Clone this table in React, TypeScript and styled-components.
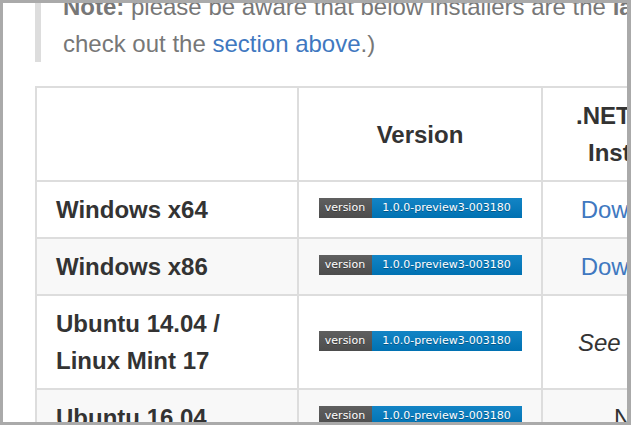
import React from "react";
import styled, { createGlobalStyle } from "styled-components";

const Global = createGlobalStyle`
  html, body { margin: 0; padding: 0; background: #fff; }
  body { font-family: "Liberation Sans", Arial, sans-serif; }
`;

const Frame = styled.div`
  box-sizing: border-box;
  width: 631px;
  height: 425px;
  border-style: solid;
  border-color: #aaaaaa;
  border-width: 3px 4px 3px 3px;
  overflow: hidden;
  background: #fff;
`;

const Content = styled.div`
  margin-top: -15px;
  padding-left: 32px;
  font-size: 24px;
  line-height: 37px;
  color: #333;
`;

const Quote = styled.blockquote`
  margin: 0 0 24px;
  padding: 0 22px;
  border-left: 6px solid #dddddd;
  color: #777;
  white-space: nowrap;
`;

const Link = styled.a`
  color: #4078c0;
  text-decoration: none;
`;

const Table = styled.table`
  border-collapse: separate;
  border-spacing: 0;
  table-layout: fixed;
  width: 692px;
  border-top: 2px solid #dddddd;
  border-left: 2px solid #dddddd;
`;

const Col = styled.col<{ $w: number }>`
  width: ${(p) => p.$w}px;
`;

const Row = styled.tr<{ $striped?: boolean }>`
  background: ${(p) => (p.$striped ? "#f8f8f8" : "#ffffff")};
`;

const Head = styled.th`
  box-sizing: border-box;
  padding: 9px 19px;
  border-right: 2px solid #dddddd;
  border-bottom: 2px solid #dddddd;
  font-weight: bold;
  text-align: center;
  vertical-align: middle;
`;

const Cell = styled.td<{ $align?: "left" | "center"; $bold?: boolean; $italic?: boolean }>`
  box-sizing: border-box;
  padding: 9px 19px;
  border-right: 2px solid #dddddd;
  border-bottom: 2px solid #dddddd;
  text-align: ${(p) => p.$align ?? "center"};
  font-weight: ${(p) => (p.$bold ? "bold" : "normal")};
  font-style: ${(p) => (p.$italic ? "italic" : "normal")};
  vertical-align: middle;
`;

const Badge = styled.span`
  display: inline-block;
  overflow: hidden;
  vertical-align: baseline;
  height: 20px;
  white-space: nowrap;
  font-family: "DejaVu Sans", Verdana, sans-serif;
  font-size: 11px;
  line-height: 20px;
  color: #fff;
`;

const BadgePart = styled.span<{ $bg: string; $w: number }>`
  display: inline-block;
  width: ${(p) => p.$w}px;
  height: 20px;
  text-align: center;
  background: linear-gradient(rgba(187, 187, 187, 0.1), rgba(0, 0, 0, 0.1)), ${(p) => p.$bg};
  text-shadow: 0 1px 0 rgba(1, 1, 1, 0.3);
  vertical-align: top;
`;

const VersionBadge = () => (
  <Badge>
    <BadgePart $bg="#555555" $w={53}>version</BadgePart>
    <BadgePart $bg="#007ec6" $w={150}>1.0.0-preview3-003180</BadgePart>
  </Badge>
);

const rows: { label: string; last: React.ReactNode; italic?: boolean }[] = [
  { label: "Windows x64", last: <Link href="#">Download</Link> },
  { label: "Windows x86", last: <Link href="#">Download</Link> },
  { label: "Ubuntu 14.04 / Linux Mint 17", last: "See below", italic: true },
  { label: "Ubuntu 16.04", last: "N/A" },
];

export default function App() {
  return (
    <>
      <Global />
      <Frame>
        <Content>
          <Quote>
            <strong>Note:</strong> please be aware that below installers are the <strong>latest bits</strong>. If you want the released bits, please
            <br />
            check out the <Link href="#">section above</Link>.)
          </Quote>
          <Table>
            <colgroup>
              <Col $w={262} />
              <Col $w={244} />
              <Col $w={184} />
            </colgroup>
            <thead>
              <Row>
                <Head></Head>
                <Head>Version</Head>
                <Head>.NET Core Installer</Head>
              </Row>
            </thead>
            <tbody>
              {rows.map((r, i) => (
                <Row key={r.label} $striped={i % 2 === 1}>
                  <Cell $align="left" $bold>
                    {r.label}
                  </Cell>
                  <Cell>
                    <VersionBadge />
                  </Cell>
                  <Cell $italic={r.italic}>{r.last}</Cell>
                </Row>
              ))}
            </tbody>
          </Table>
        </Content>
      </Frame>
    </>
  );
}
